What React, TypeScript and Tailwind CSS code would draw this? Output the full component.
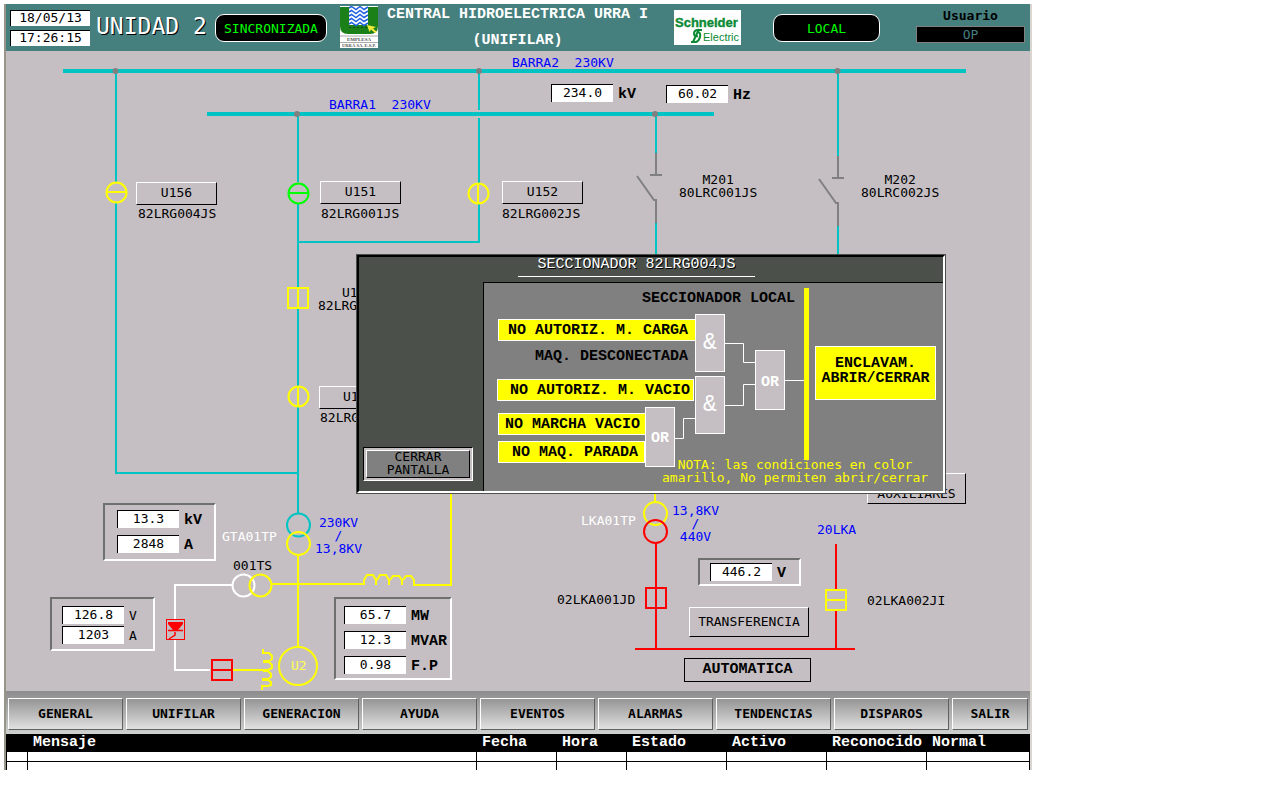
import type { ReactNode } from "react";

const MONO = "font-['DejaVu_Sans_Mono',monospace]";
const WIDE = "font-['Liberation_Mono',monospace] text-[15px] leading-[15px]";

function Label({ at, children }: { at: string; children: ReactNode }) {
  return <span className={`absolute whitespace-pre text-center ${at}`}>{children}</span>;
}

function Readout({ value, unit, bold = true }: { value: string; unit: string; bold?: boolean }) {
  return (
    <div className="flex items-center gap-[5px] whitespace-nowrap">
      <output className="block h-[18px] w-[62px] border-l border-t border-black bg-white text-center leading-4">
        {value}
      </output>
      <span className={bold ? `pt-[2px] font-bold ${WIDE}` : ""}>{unit}</span>
    </div>
  );
}

const panel =
  "absolute flex flex-col border-2 border-b-white border-r-white border-l-[#6e706e] border-t-[#6e706e]";

function RaisedButton({ at, children }: { at: string; children: ReactNode }) {
  return (
    <button
      className={`absolute border border-b-black border-l-white border-r-black border-t-white pb-[2px] ${at}`}
    >
      {children}
    </button>
  );
}

function UrraLogo() {
  return (
    <svg viewBox="0 0 38 42" className="h-[42px] w-[38px] shrink-0 bg-white" role="img" aria-label="Empresa Urrá">
      <path d="M0 1H9V19H28V1H38V20Q38 28 30 28H8Q0 28 0 20Z" fill="#1b8018" />
      <g fill="none" stroke="#1d5fe0" strokeWidth="1.5">
        <path d="M9 2l2.500-1.500 4.500 3 4-3 4 3 4-2.500" />
        <path d="M9 6l2.500-1.500 4.500 3 4-3 4 3 4-2.500" />
        <path d="M9 10l2.500-1.500 4.500 3 4-3 4 3 4-2.500" />
        <path d="M9 14l2.500-1.500 4.500 3 4-3 4 3 4-2.500" />
        <path d="M9 18l2.500-1.500 4.500 3 4-3 4 3 4-2.500" />
      </g>
      <path d="M9 21.500H36" stroke="#0b4c12" strokeDasharray="2 2" />
      <path d="M27 19l9 2-3 1.500 4 3.500-2 1-4-3.500-1.500 2.500Z" fill="#f4ea3c" />
      <path d="M0 30H38M0 36.500H38" stroke="#aaa" strokeWidth="1" />
      <text x="19" y="35" textAnchor="middle" fontSize="5" fontWeight="bold" fill="#555" className="font-['Liberation_Serif',serif]">EMPLESA</text>
      <text x="19" y="41" textAnchor="middle" fontSize="4.600" fontWeight="bold" fill="#555" className="font-['Liberation_Serif',serif]">URRÁ SA. E.S.P.</text>
    </svg>
  );
}

function SchneiderLogo() {
  return (
    <svg viewBox="0 0 67 35" className="h-[35px] w-[67px] shrink-0 bg-white" role="img" aria-label="Schneider Electric">
      <g fill="#0b8a34" className="font-['Liberation_Sans',sans-serif]">
        <text x="1" y="17" fontSize="13" fontWeight="bold" stroke="#0b8a34" strokeWidth="0.400">Schneider</text>
        <text x="29" y="31" fontSize="11">Electric</text>
      </g>
      <g fill="none" stroke="#0b8a34" strokeWidth="2">
        <path d="M28 20H24Q20 20 20 23.500T24 26" />
        <path d="M24 22Q27 23 26 27T22 32H17" />
        <path d="M25 19L19 32" />
      </g>
    </svg>
  );
}

function Header() {
  return (
    <header className="flex h-[47px] items-start bg-[#457f7e]">
      <div className="ml-1 mt-[6px] flex w-20 shrink-0 flex-col gap-1 text-center text-black">
        <time className="h-4 border-l border-t border-black bg-white">18/05/13</time>
        <time className="h-4 border-l border-t border-black bg-white">17:26:15</time>
      </div>
      <h1 className="ml-1 mt-[10px] w-[113px] shrink-0 whitespace-nowrap pl-[2px] text-[23px] leading-6 text-white [text-shadow:1px_1px_0_#000]">
        UNIDAD 2
      </h1>
      <div className="ml-2 mt-[10px] flex h-7 w-28 shrink-0 items-center justify-center rounded-[9px] border border-white bg-black text-[#00ff00]">
        SINCRONIZADA
      </div>
      <div className="ml-[13px] mt-[2px]">
        <UrraLogo />
      </div>
      <div className={`ml-[9px] mt-[3px] flex shrink-0 flex-col gap-[11px] whitespace-nowrap text-center font-bold text-white ${WIDE}`}>
        <span>CENTRAL HIDROELECTRICA URRA I</span>
        <span>(UNIFILAR)</span>
      </div>
      <div className="ml-[26px] mt-[6px]">
        <SchneiderLogo />
      </div>
      <div className="ml-8 mt-[10px] flex h-7 w-[107px] shrink-0 items-center justify-center rounded-[9px] border border-white bg-black text-[#00ff00]">
        LOCAL
      </div>
      <div className="ml-auto mr-[5px] mt-[5px] flex w-[109px] shrink-0 flex-col gap-1 text-center">
        <span className="font-bold text-black">Usuario</span>
        <span className="h-[17px] border border-[#808080] bg-black leading-[15px] text-[#457f7e]">OP</span>
      </div>
    </header>
  );
}

function Wiring() {
  return (
    <svg viewBox="6 51 1024 640" className="absolute left-0 top-0 h-[640px] w-[1024px]" fill="none" strokeWidth="2" aria-hidden="true">
      <g stroke="#00c4c4">
        <path strokeWidth="4" d="M63 71H966M207 114H714" />
        <path d="M116 71V182M116 203V473H298" />
        <path d="M298 114V182M298 204V287M298 309V386M298 407V513" />
        <path d="M479 71V110M479 118V183M479 204V242H298" />
        <path d="M656 114V153M656 223V256M838 71V156M838 226V256" />
        <circle cx="298.500" cy="525" r="11.500" />
      </g>
      <g fill="#808080">
        <circle cx="115.500" cy="71" r="3" />
        <circle cx="479" cy="71" r="3" />
        <circle cx="837.500" cy="71" r="3" />
        <circle cx="297" cy="114" r="3" />
        <circle cx="655" cy="114" r="3" />
      </g>
      <path stroke="#808080" d="M656 153V175M650 175H662M637 176L654 200H656V223M838 156V178M832 178H844M819 179L836 203H838V226" />
      <g stroke="#00ff00">
        <circle cx="298.500" cy="193.500" r="10" />
        <path d="M288 193H309" />
      </g>
      <g stroke="#ffff00">
        <circle cx="116.500" cy="192.500" r="10" />
        <path d="M106 192H127" />
        <circle cx="478.500" cy="193.500" r="10" />
        <path d="M478 184V204" />
        <rect x="288" y="288" width="20" height="20" />
        <path d="M298 288V308" />
        <circle cx="298.500" cy="396.500" r="10" />
        <path d="M298 387V407" />
        <circle cx="298.500" cy="543.500" r="11.500" />
        <path d="M298 555V647" />
        <circle cx="298" cy="666" r="19" />
        <path d="M272 584H364V580L367 575H373L376 580V585M377 580L380 575H386L389 580V585M390 580L393 576H399L402 580V585M403 580L406 576H411L414 580V585H451V490" />
        <path d="M263 649V653H269L272 656V659L269 661H263M263 662H269L272 665V668L268 670H233M263 671H268L271 674V677L268 679H262M262 680H268L271 682V685L268 686H262V690" />
        <path d="M655 490V502" />
        <circle cx="655.500" cy="513.500" r="11.500" />
      </g>
      <g stroke="#ffffff">
        <circle cx="243.500" cy="585.500" r="11" />
        <path d="M232 585H175V619M175 640V670H210" />
      </g>
      <circle cx="260.500" cy="585.500" r="11" stroke="#ffff00" />
      <g stroke="#ff0000">
        <rect x="212" y="660" width="20" height="20" />
        <path d="M212 670H232" />
        <rect x="166.500" y="619.500" width="18" height="20" strokeWidth="1" />
        <path d="M168 622H183V624L178 630H173L168 624Z" fill="#ff0000" stroke="none" />
        <path d="M168 630.500H183M175 632V635L169 639" strokeWidth="1.500" />
        <circle cx="655.500" cy="531.500" r="11.500" />
        <path d="M656 543V649" />
        <rect x="646" y="588" width="20" height="20" />
        <path d="M635 649H855M836 544V589M836 611V649" />
      </g>
      <g stroke="#ffff00">
        <rect x="826" y="590" width="20" height="20" />
        <path d="M826 600H846" />
      </g>
    </svg>
  );
}

function Condition({ at, children }: { at: string; children: ReactNode }) {
  return (
    <div className={`absolute flex h-[22px] items-center border border-white bg-[#ffff00] ${at}`}>{children}</div>
  );
}

const gate = "absolute flex w-[30px] items-center justify-center border border-white bg-[#c5bfc3] text-white";

function InterlockDialog() {
  return (
    <section
      role="dialog"
      aria-labelledby="dialog-title"
      className="absolute left-[350px] top-[203px] h-[240px] w-[590px] border border-[#4b504b]"
    >
      <div className="flex h-full flex-col border-2 border-b-white border-l-black border-r-white border-t-black bg-[#4b504b]">
        <h2
          id="dialog-title"
          className={`ml-[159px] h-5 w-[237px] shrink-0 border-b border-white text-center text-white [text-shadow:1px_1px_0_#000] ${WIDE}`}
        >
          SECCIONADOR 82LRG004JS
        </h2>
        <div className="mt-[5px] flex flex-1">
          <div className="flex w-[124px] shrink-0 items-end pb-[10px] pl-1">
            <button className="h-[34px] w-[110px] border border-b-white border-l-black border-r-white border-t-black bg-[#c5bfc3] p-[2px]">
              <span className="flex h-full items-center justify-center border border-b-black border-l-white border-r-black border-t-white bg-[#808080] pb-[2px] text-black">
                CERRAR
                <br />
                PANTALLA
              </span>
            </button>
          </div>
          <div className={`relative flex-1 border-l border-t border-black bg-[#808080] font-bold text-black ${WIDE}`}>
            <svg viewBox="484 283 459 208" className="absolute left-0 top-0 h-[208px] w-[459px]" fill="none" aria-hidden="true">
              <path stroke="#fff" d="M725 343.500H743.500V362.500H755M725 405.500H743.500V384.500H755M675 438.500H683.500V418.500H695M785 380.500H805" />
              <path stroke="#ffff00" strokeWidth="5" d="M806.500 288V460" />
            </svg>
            <Label at="left-[158px] top-2">SECCIONADOR LOCAL</Label>
            <Condition at="left-[14px] top-9 w-[198px] pl-[9px]">NO AUTORIZ. M. CARGA</Condition>
            <Label at="left-[51px] top-[66px]">MAQ. DESCONECTADA</Label>
            <Condition at="left-[13px] top-24 w-[197px] pl-3">NO AUTORIZ. M. VACIO</Condition>
            <Condition at="left-[14px] top-[130px] w-[148px] pl-[6px]">NO MARCHA VACIO</Condition>
            <Condition at="left-[14px] top-[158px] w-[147px] pl-[13px]">NO MAQ. PARADA</Condition>
            <div className={`${gate} left-[211px] top-[31px] h-[58px] text-[23px] font-normal`}>&amp;</div>
            <div className={`${gate} left-[211px] top-[93px] h-[58px] text-[23px] font-normal`}>&amp;</div>
            <div className={`${gate} left-[161px] top-[124px] h-[60px] pt-[2px]`}>OR</div>
            <div className={`${gate} left-[271px] top-[67px] h-[60px] pt-1`}>OR</div>
            <div className="absolute left-[331px] top-[63px] flex h-[54px] w-[121px] items-center justify-center border border-white bg-[#ffff00] pb-1 text-center">
              ENCLAVAM.
              <br />
              ABRIR/CERRAR
            </div>
            <p className={`absolute left-[178px] top-[175px] whitespace-nowrap text-center text-[13px] font-normal leading-[13px] text-[#ffff00] ${MONO}`}>
              NOTA: las condiciones en color
              <br />
              amarillo, No permiten abrir/cerrar
            </p>
          </div>
        </div>
      </div>
    </section>
  );
}

function Diagram() {
  return (
    <main className="relative h-[640px] overflow-hidden bg-[#c5bfc3] text-black">
      <Wiring />

      <Label at="left-[506px] top-[5px] text-[#0000ff]">BARRA2  230KV</Label>
      <Label at="left-[323px] top-[47px] text-[#0000ff]">BARRA1  230KV</Label>
      <div className="absolute left-[545px] top-[33px]">
        <Readout value="234.0" unit="kV" />
      </div>
      <div className="absolute left-[660px] top-[34px]">
        <Readout value="60.02" unit="Hz" />
      </div>

      <RaisedButton at="left-[130px] top-[131px] h-[23px] w-[81px]">U156</RaisedButton>
      <Label at="left-[132px] top-[156px]">82LRG004JS</Label>
      <RaisedButton at="left-[314px] top-[130px] h-[23px] w-[81px]">U151</RaisedButton>
      <Label at="left-[315px] top-[156px]">82LRG001JS</Label>
      <RaisedButton at="left-[496px] top-[130px] h-[23px] w-[81px]">U152</RaisedButton>
      <Label at="left-[496px] top-[156px]">82LRG002JS</Label>
      <Label at="left-[673px] top-[122px]">{"M201\n80LRC001JS"}</Label>
      <Label at="left-[855px] top-[122px]">{"M202\n80LRC002JS"}</Label>
      <Label at="left-[336px] top-[235px]">U1</Label>
      <Label at="left-[312px] top-[248px]">82LRG</Label>
      <RaisedButton at="left-[313px] top-[335px] h-[23px] w-[81px] pl-[23px] text-left">U1</RaisedButton>
      <Label at="left-[314px] top-[360px]">82LRG</Label>

      <div className={`${panel} left-[97px] top-[452px] h-[58px] w-[113px] gap-[7px] pl-3 pt-[5px]`}>
        <Readout value="13.3" unit="kV" />
        <Readout value="2848" unit="A" />
      </div>
      <div className={`${panel} left-[44px] top-[546px] h-[54px] w-[105px] gap-[2px] pl-[10px] pt-[7px]`}>
        <Readout value="126.8" unit="V" bold={false} />
        <Readout value="1203" unit="A" bold={false} />
      </div>
      <div className={`${panel} left-[328px] top-[546px] h-[83px] w-[118px] gap-[7px] pl-2 pt-[7px]`}>
        <Readout value="65.7" unit="MW" />
        <Readout value="12.3" unit="MVAR" />
        <Readout value="0.98" unit="F.P" />
      </div>
      <div className={`${panel} left-[692px] top-[507px] h-7 w-[103px] pl-[10px] pt-[3px]`}>
        <Readout value="446.2" unit="V" />
      </div>

      <Label at="left-[216px] top-[479px] text-white">GTA01TP</Label>
      <Label at="left-[309px] top-[465px] text-[#0000ff]">{"230KV\n/\n13,8KV"}</Label>
      <Label at="left-[227px] top-[508px]">001TS</Label>
      <Label at="left-[285px] top-[608px] text-[#ffff50]">U2</Label>
      <Label at="left-[575px] top-[463px] text-white">LKA01TP</Label>
      <Label at="left-[666px] top-[453px] text-[#0000ff]">{"13,8KV\n/\n440V"}</Label>
      <Label at="left-[811px] top-[472px] text-[#0000ff]">20LKA</Label>
      <Label at="left-[551px] top-[542px]">02LKA001JD</Label>
      <Label at="left-[861px] top-[543px]">02LKA002JI</Label>
      <RaisedButton at="left-[683px] top-[556px] h-[30px] w-[120px]">TRANSFERENCIA</RaisedButton>
      <RaisedButton at="left-[861px] top-[422px] h-[31px] w-[99px] pt-[12px]">AUXILIARES</RaisedButton>
      <div className={`absolute left-[678px] top-[607px] flex h-6 w-[127px] items-center justify-center border border-black pb-[2px] font-bold ${WIDE}`}>
        AUTOMATICA
      </div>

      <InterlockDialog />
    </main>
  );
}

const sections = [
  "GENERAL", "UNIFILAR", "GENERACION", "AYUDA", "EVENTOS", "ALARMAS", "TENDENCIAS", "DISPAROS", "SALIR",
];

function NavBar() {
  return (
    <nav className="grid h-[43px] grid-cols-[repeat(8,115fr)_76fr] gap-[3px] bg-linear-to-b from-[#8c8c8c] to-[#cfd0d0] px-[2px] pb-1 pt-[7px]">
      {sections.map((name) => (
        <button
          key={name}
          className="min-w-0 border border-b-[#606060] border-l-white border-r-[#606060] border-t-white bg-linear-to-b from-[#959595] to-[#e2e1e2] pb-[2px] font-bold text-black"
        >
          {name}
        </button>
      ))}
    </nav>
  );
}

const columns = ["", "Mensaje", "Fecha", "Hora", "Estado", "Activo", "Reconocido", "Normal"];

function AlarmTable() {
  return (
    <div className="h-9 overflow-hidden border-x border-black bg-white">
      <table className="w-full table-fixed border-collapse">
        <colgroup>
          <col className="w-5" />
          <col />
          <col className="w-20" />
          <col className="w-[70px]" />
          <col className="w-[100px]" />
          <col className="w-[100px]" />
          <col className="w-[100px]" />
          <col className="w-[103px]" />
        </colgroup>
        <thead>
          <tr className={`bg-black text-left text-white ${WIDE}`}>
            {columns.map((name) => (
              <th key={name} scope="col" className="h-[17px] p-0 pl-[6px] font-bold">
                {name}
              </th>
            ))}
          </tr>
        </thead>
        <tbody>
          {["first", "second"].map((row) => (
            <tr key={row}>
              {columns.map((name) => (
                <td key={name} className="h-[10px] border border-black p-0 first:border-l-0 last:border-r-0" />
              ))}
            </tr>
          ))}
        </tbody>
      </table>
    </div>
  );
}

export default function App() {
  return (
    <div className="min-h-screen bg-white pl-1 pt-1">
      <div className={`w-full max-w-[1028px] border-l-2 border-r-2 border-l-[#97958a] border-r-[#d9d5cf] text-[13px] leading-[13px] ${MONO}`}>
        <Header />
        <Diagram />
        <NavBar />
        <AlarmTable />
      </div>
    </div>
  );
}
